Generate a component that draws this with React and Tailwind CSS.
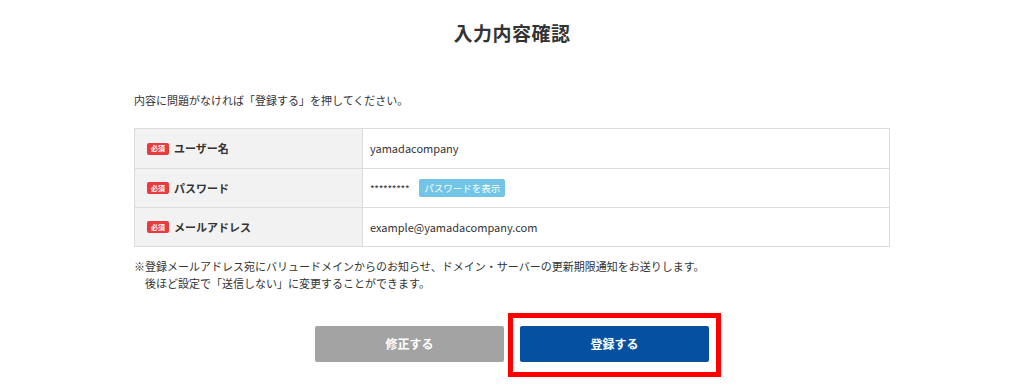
import React from 'react'

const font = { fontFamily: '"Noto Sans CJK JP", "Noto Sans", sans-serif' }

function Required() {
  return (
    <span className="inline-flex items-center justify-center w-[22px] h-[12px] rounded-[2px] bg-[#e83a3f] text-white text-[7px] font-bold leading-none mr-[5px]">
      必須
    </span>
  )
}

const rows = [
  { label: 'ユーザー名', value: 'yamadacompany' },
  { label: 'パスワード', value: '*********', toggle: true },
  { label: 'メールアドレス', value: 'example@yamadacompany.com' },
]

export default function App() {
  return (
    <div className="w-[1024px] h-[386px] bg-white text-[#333]" style={font}>
      <div className="w-[756px] mx-auto pt-[19px]">
        <h1 className="text-center text-[19px] font-bold leading-[28px] tracking-[0.5px]">入力内容確認</h1>

        <p className="mt-[45px] text-[11px] leading-[16px]">内容に問題がなければ「登録する」を押してください。</p>

        <div className="mt-[20px] border border-[#dcdcdc]">
          {rows.map((r, i) => (
            <div key={r.label} className={`flex h-[39px] ${i > 0 ? 'border-t border-[#dcdcdc]' : ''}`}>
              <div className="w-[228px] bg-[#f2f2f2] border-r border-[#dcdcdc] flex items-center pl-[12px] text-[11px] font-bold">
                <Required />
                {r.label}
              </div>
              <div className="flex-1 flex items-center pl-[7px] text-[11px]">
                <span className={r.toggle ? 'text-[10px] tracking-[-0.3px]' : ''}>{r.value}</span>
                {r.toggle && (
                  <span className="ml-[10px] h-[18px] px-[5px] flex items-center bg-[#72c5e6] text-white text-[9.5px] rounded-[2px]">
                    パスワードを表示
                  </span>
                )}
              </div>
            </div>
          ))}
        </div>

        <div className="mt-[11px] text-[11px] leading-[17px]">
          <p>※登録メールアドレス宛にバリュードメインからのお知らせ、ドメイン・サーバーの更新期限通知をお送りします。</p>
          <p className="pl-[11px]">後ほど設定で「送信しない」に変更することができます。</p>
        </div>

        <div className="mt-[34px] flex justify-center gap-[16px]">
          <button className="w-[189px] h-[36px] bg-[#a3a3a3] text-white text-[12px] font-bold rounded-[2px]">修正する</button>
          <div className="relative">
            <button className="w-[189px] h-[36px] bg-[#0650a0] text-white text-[12px] font-bold rounded-[2px]">登録する</button>
            <div className="absolute left-[-12px] right-[-12px] top-[-13px] bottom-[-15px] border-[5px] border-[#ff0000] pointer-events-none"></div>
          </div>
        </div>
      </div>
    </div>
  )
}
